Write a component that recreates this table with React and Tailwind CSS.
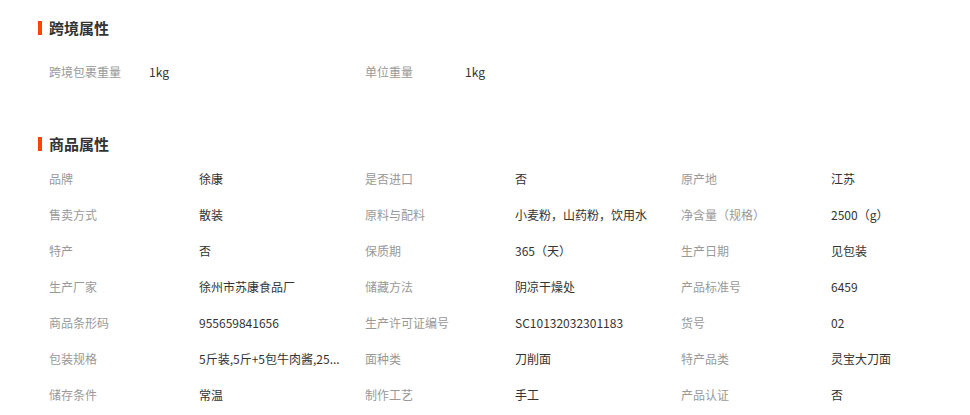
// Product attributes panel: cross-border block + product attribute grid.

const crossBorder = [
  ["跨境包裹重量", "1kg"],
  ["单位重量", "1kg"],
];

const attrs = [
  ["品牌", "徐康"],
  ["是否进口", "否"],
  ["原产地", "江苏"],
  ["售卖方式", "散装"],
  ["原料与配料", "小麦粉，山药粉，饮用水"],
  ["净含量（规格）", "2500（g）"],
  ["特产", "否"],
  ["保质期", "365（天）"],
  ["生产日期", "见包装"],
  ["生产厂家", "徐州市苏康食品厂"],
  ["储藏方法", "阴凉干燥处"],
  ["产品标准号", "6459"],
  ["商品条形码", "955659841656"],
  ["生产许可证编号", "SC10132032301183"],
  ["货号", "02"],
  ["包装规格", "5斤装,5斤+5包牛肉酱,25..."],
  ["面种类", "刀削面"],
  ["特产品类", "灵宝大刀面"],
  ["储存条件", "常温"],
  ["制作工艺", "手工"],
  ["产品认证", "否"],
];

function Heading({ children }) {
  return (
    <div className="flex h-4 items-center">
      <span className="mr-[7px] h-[14px] w-1 bg-[#ff4400]" />
      <span className="text-[15px] font-bold leading-4 text-[#333]">{children}</span>
    </div>
  );
}

function Cell({ label, value, labelWidth }) {
  return (
    <div className="flex h-9 items-center pl-[11px] text-xs">
      <span className={`${labelWidth} shrink-0 text-[#999]`}>{label}</span>
      <span className="whitespace-nowrap text-[#333]">{value}</span>
    </div>
  );
}

export default function App() {
  return (
    <div
      className="h-[415px] w-[970px] overflow-hidden bg-white pl-[38px] pt-5"
      style={{ fontFamily: '"Noto Sans CJK SC", "Liberation Sans", sans-serif' }}
    >
      <Heading>跨境属性</Heading>
      <div className="mt-[18px] grid grid-cols-[repeat(3,316px)]">
        {crossBorder.map(([l, v]) => (
          <Cell key={l} label={l} value={v} labelWidth="w-[100px]" />
        ))}
      </div>
      <div className="mt-[46px]">
        <Heading>商品属性</Heading>
      </div>
      <div className="mt-[9px] grid grid-cols-[repeat(3,316px)]">
        {attrs.map(([l, v]) => (
          <Cell key={l} label={l} value={v} labelWidth="w-[150px]" />
        ))}
      </div>
    </div>
  );
}
